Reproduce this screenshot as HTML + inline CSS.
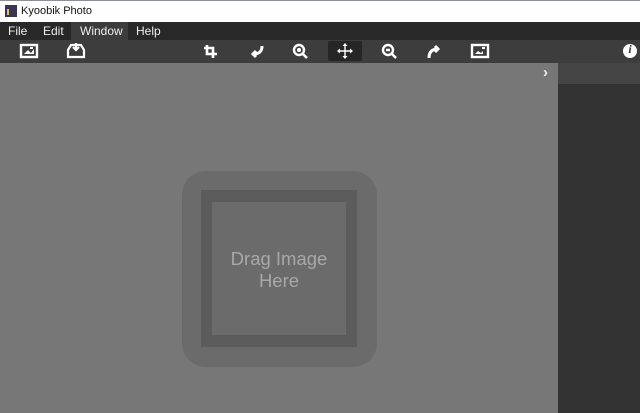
<!DOCTYPE html>
<html><head><style>
*{margin:0;padding:0;box-sizing:border-box}
body{width:640px;height:413px;overflow:hidden;font-family:"Liberation Sans",sans-serif;background:#777;position:relative}
.a{position:absolute}
.m{position:absolute;top:24px;font-size:12px;color:#eee}
</style></head><body>
<div class="a" style="left:0;top:0;width:640px;height:22px;background:#fff"></div>
<div class="a" style="left:0;top:0;width:640px;height:1px;background:#8a9096"></div>
<div class="a" style="left:5px;top:5px;width:12px;height:12px;background:#3a3550"></div>
<div class="a" style="left:7px;top:9px;width:2px;height:6px;background:#e0c070"></div>
<div class="a" style="left:21px;top:5px;font-size:11px;color:#111">Kyoobik Photo</div>
<div class="a" style="left:0;top:22px;width:640px;height:18px;background:#282828"></div>
<div class="a" style="left:71px;top:22px;width:57px;height:18px;background:#3c3c3c"></div>
<div class="m" style="left:8px">File</div>
<div class="m" style="left:43px">Edit</div>
<div class="m" style="left:80px">Window</div>
<div class="m" style="left:136px">Help</div>
<div class="a" style="left:0;top:40px;width:640px;height:23px;background:#3d3d3d"></div>
<div class="a" style="left:328px;top:41px;width:34px;height:20px;background:#262626;border-radius:2px"></div>
<svg class="a" style="left:0;top:40px" width="640" height="23" fill="none" stroke="#fff" stroke-width="2.4">
<rect x="21" y="5" width="16" height="12"/><path d="M24 14l4-4 3 3 3-4v5z" fill="#fff" stroke="none"/><rect x="30" y="7" width="3" height="2" fill="#fff" stroke="none"/>
<path d="M68 10l3-5h10l3 5v7H68z" stroke-width="2.2"/><path d="M76 3v7m-3-3 3 3 3-3" stroke-width="2.2"/>
<path d="M207 5v9h10M204 8h9v10" stroke-width="2.6"/>
<path d="M262 6c0 6-3 8-9 8m3-3-3 3 3 3" stroke-width="3"/>
<circle cx="299" cy="10" r="5"/><path d="M303 14l4 4M297 10h4M299 8v4" stroke-width="2.6"/>
<path d="M345 5v12M339 11h12" stroke-width="1.4"/><path d="M345 3l-2.5 3h5zM345 19l-2.5-3h5zM337 11l3-2.5v5zM353 11l-3-2.5v5z" fill="#fff" stroke="none"/>
<circle cx="388" cy="10" r="5"/><path d="M392 14l4 4M386 10h4" stroke-width="2.6"/>
<path d="M429 18c0-6 3-9 9-9m-3-3 3 3-3 3" stroke-width="3"/>
<rect x="472" y="5" width="16" height="12"/><path d="M475 14l3-3 3 2 2-2v3z" fill="#fff" stroke="none"/><rect x="482" y="7" width="3" height="2" fill="#fff" stroke="none"/>
<circle cx="630" cy="11" r="7" fill="#fff" stroke="none"/>
</svg>
<div class="a" style="left:625px;top:42px;width:10px;font:italic bold 12px 'Liberation Serif',serif;color:#3d3d3d;text-align:center">i</div>
<div class="a" style="left:0;top:63px;width:558px;height:350px;background:#777"></div>
<div class="a" style="left:543px;top:64px;font-size:15px;font-weight:bold;color:#eee">›</div>
<div class="a" style="left:558px;top:63px;width:82px;height:21px;background:#454545"></div>
<div class="a" style="left:558px;top:84px;width:82px;height:329px;background:#333"></div>
<div class="a" style="left:182px;top:171px;width:195px;height:196px;background:#6b6b6b;border-radius:24px"></div>
<div class="a" style="left:201px;top:190px;width:156px;height:157px;background:#5c5c5c"></div>
<div class="a" style="left:212px;top:202px;width:134px;height:133px;background:#6b6b6b"></div>
<div class="a" style="left:212px;top:248px;width:134px;text-align:center;font-size:18.5px;line-height:22px;color:#a8a8a8">Drag Image<br>Here</div>
</body></html>
